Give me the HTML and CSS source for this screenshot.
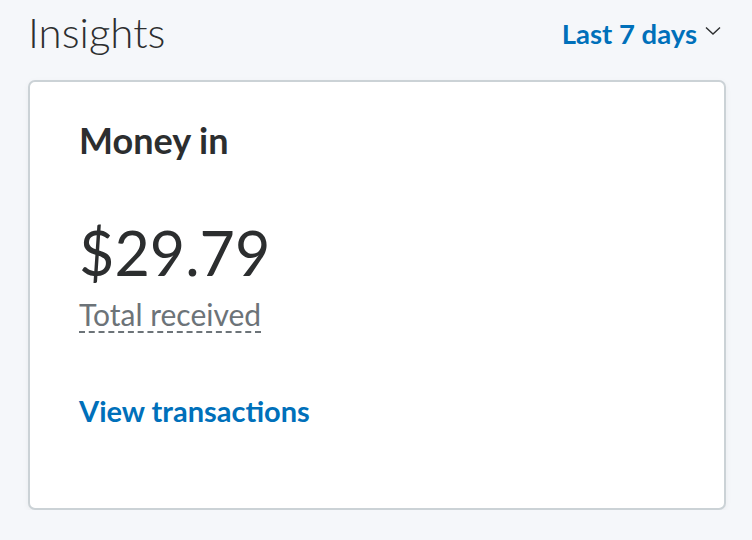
FILE: index.html
```html
<!DOCTYPE html>
<html lang="en">
<head>
    <meta charset="UTF-8">
    <meta name="viewport" content="width=device-width, initial-scale=1.0">
    <title>Insights</title>
    <link rel="stylesheet" href="styles.css">
</head>
<body>
    <div class="insights">
        <div class="header">
            <h1>Insights</h1>
            <button class="range">
                Last 7 days
                <svg class="chevron" width="16" height="10" viewBox="0 0 16 10">
                    <path d="M1 1.5 L8 8 L15 1.5" fill="none" stroke="#2c2e2f" stroke-width="1.4"/>
                </svg>
            </button>
        </div>
        <div class="card">
            <h2>Money in</h2>
            <div class="amount">$29.79</div>
            <span class="label">Total received</span>
            <a class="link" href="#">View transactions</a>
        </div>
    </div>
</body>
</html>
```

FILE: styles.css
```css
body {
    font-family: Lato, "Open Sans", sans-serif;
    background-color: #f5f7fa;
    margin: 0;
    color: #2c2e2f;
}
.insights {
    padding: 0 26px 0 28px;
}
.header {
    display: flex;
    justify-content: space-between;
    align-items: center;
    height: 66px;
    padding-right: 5px;
}
.header h1 {
    margin: 0;
    margin-top: -2px;
    font-size: 42px;
    font-weight: 300;
    color: #2c2e2f;
}
.range {
    display: flex;
    align-items: center;
    gap: 8px;
    background: none;
    border: none;
    padding: 0;
    font-family: inherit;
    font-size: 27.5px;
    font-weight: 700;
    color: #0070ba;
    cursor: pointer;
}
.chevron {
    margin-top: -4px;
}
.card {
    margin-top: 14px;
    height: 430px;
    box-sizing: border-box;
    background-color: #fff;
    border: 2px solid #cbd2d6;
    border-radius: 7px;
    box-shadow: 0 2px 6px rgba(0, 0, 0, 0.05);
    padding: 36px 49px;
    display: flex;
    flex-direction: column;
    align-items: flex-start;
}
.card h2 {
    margin: 0;
    font-size: 36px;
    font-weight: 700;
}
.amount {
    margin-top: 60px;
    font-size: 61px;
    font-weight: 400;
    line-height: 1;
}
.label {
    margin-top: 15px;
    font-size: 30px;
    color: #6c7378;
    border-bottom: 2px dashed #6c7378;
    line-height: 1.1;
}
.link {
    margin-top: 60px;
    font-size: 29px;
    font-weight: 700;
    color: #0070ba;
    text-decoration: none;
}
```
